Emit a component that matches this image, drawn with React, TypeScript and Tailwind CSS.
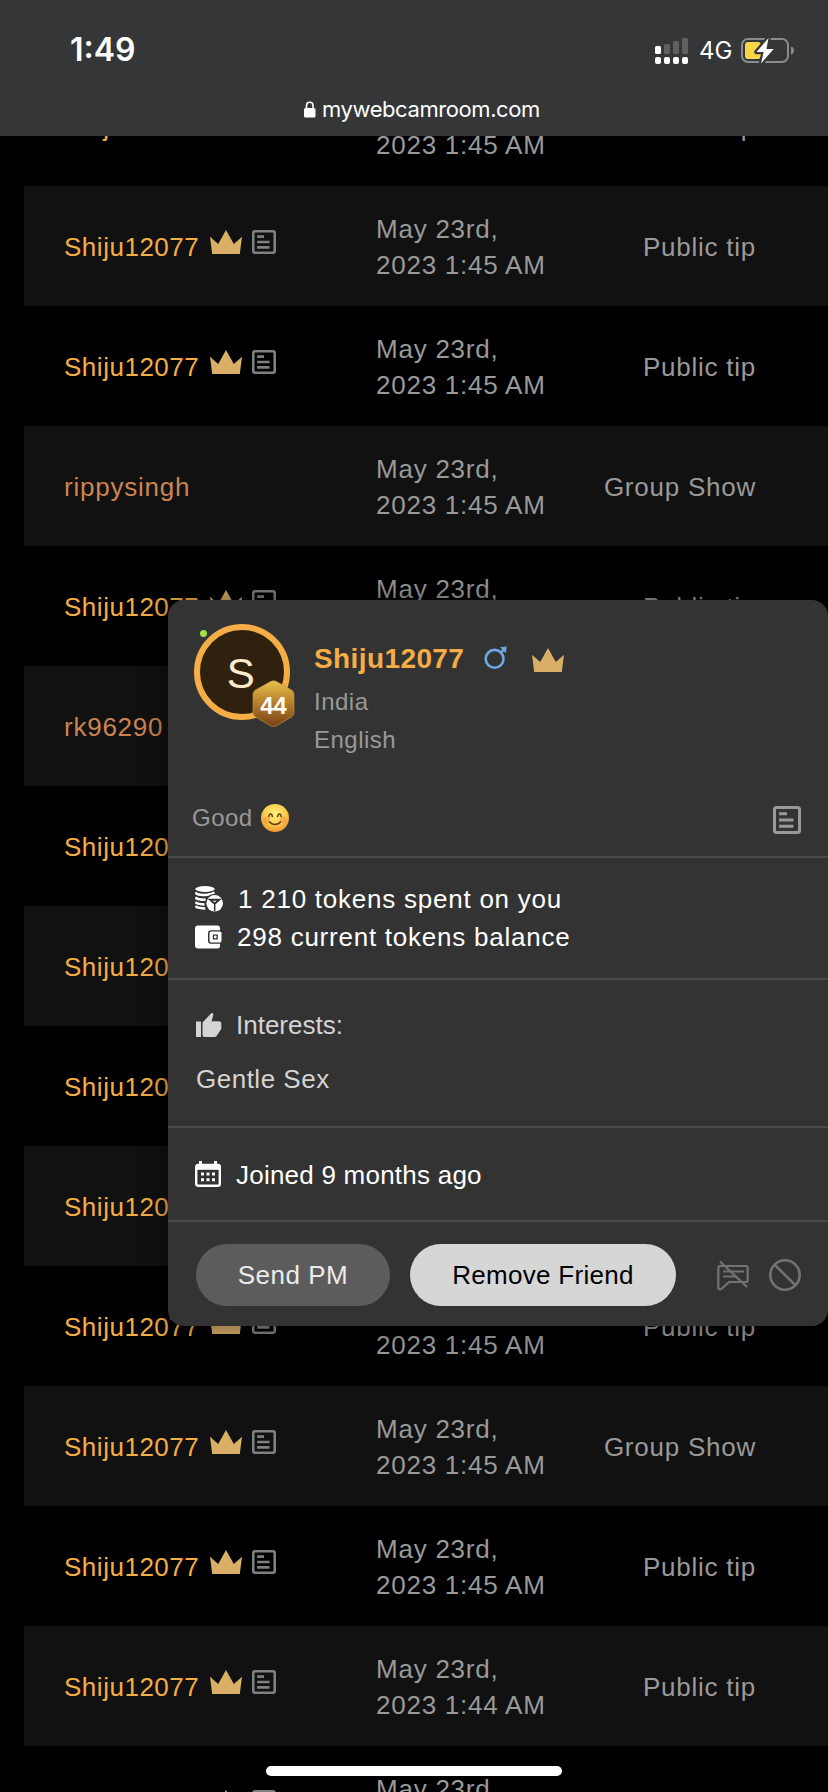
import React from "react";

type Tip = {
  user: string;
  vip: boolean;
  time: string;
  type: string;
};

const vipTip = (type = "Public tip", time = "2023 1:45 AM"): Tip => ({
  user: "Shiju12077",
  vip: true,
  time,
  type,
});

const tips: Tip[] = [
  vipTip(),
  vipTip(),
  vipTip(),
  { user: "rippysingh", vip: false, time: "2023 1:45 AM", type: "Group Show" },
  vipTip(),
  { user: "rk96290", vip: false, time: "2023 1:45 AM", type: "Group Show" },
  vipTip(),
  vipTip(),
  vipTip(),
  vipTip(),
  vipTip(),
  vipTip("Group Show"),
  vipTip(),
  vipTip("Public tip", "2023 1:44 AM"),
  vipTip("Public tip", "2023 1:44 AM"),
];

const Crown = ({ className = "" }: { className?: string }) => (
  <svg className={className} width="32" height="24" viewBox="0 0 32 24" fill="#d9ae66">
    <path d="M0 6.8 8.2 14 16 0l7.8 14L32 6.8 29.8 24H2.2z" />
  </svg>
);

const NoteIcon = ({ size, color }: { size: number; color: string }) => (
  <svg width={size} height={size} viewBox="0 0 28 28" fill="none" stroke={color} strokeWidth="3">
    <rect x="1.5" y="1.5" width="25" height="25" rx="2" />
    <path d="M6 7.7h8M6 14h14.5M6 20.3h14.5" />
  </svg>
);

const MaleIcon = () => (
  <svg width="24" height="24" viewBox="0 0 24 24" fill="none" stroke="#6ea8e6" strokeWidth="2.6">
    <circle cx="10.6" cy="12.8" r="8.9" />
    <path d="m16.5 6.8 4-4" />
    <path d="m16 1.2 6.6-.6-.6 6.6z" fill="#6ea8e6" stroke="none" />
  </svg>
);

const SmileIcon = () => (
  <svg width="28" height="28" viewBox="0 0 28 28" role="img" aria-label="😊">
    <defs>
      <radialGradient id="face" cx="50%" cy="36%" r="66%">
        <stop offset="0" stopColor="#fff07f" />
        <stop offset="0.55" stopColor="#fcd050" />
        <stop offset="1" stopColor="#e8912c" />
      </radialGradient>
    </defs>
    <circle cx="14" cy="14" r="14" fill="url(#face)" />
    <circle cx="5.5" cy="16" r="3.5" fill="#f4703a" opacity="0.35" />
    <circle cx="22.5" cy="16" r="3.5" fill="#f4703a" opacity="0.35" />
    <g fill="none" stroke="#6b3d0e" strokeWidth="1.5" strokeLinecap="round">
      <path d="M7.8 12.6c.4-3.6 3.2-3.6 3.6 0M16.6 12.6c.4-3.6 3.2-3.6 3.6 0" />
      <path d="M8.4 17.8c2.8 3.6 8.4 3.6 11.2 0" />
    </g>
  </svg>
);

const TokensIcon = () => (
  <svg width="28" height="26" viewBox="0 0 28 26">
    <ellipse cx="10" cy="3" rx="9.8" ry="2.9" fill="#fff" />
    <g fill="none" stroke="#fff" strokeWidth="2.5">
      <path d="M.3 6.6c2 2.2 7.2 2.7 12 2.1 3-.3 5.6-1 7.2-2.2" />
      <path d="M.3 11.6c2 1.6 5.5 2.3 10.6 2.1" />
      <path d="M.3 16.3c2 1.5 5 2.1 9.2 2.1" />
      <path d="M.3 20.3c2 1.5 5 2.1 10 2.1" />
    </g>
    <circle cx="19.7" cy="17.3" r="9.6" fill="#333" />
    <circle cx="19.7" cy="17.3" r="8.3" fill="#fff" />
    <path d="M14.500 13.400h10.400l-4.300 3.800h-1.800zM19.700 16v9" fill="#333" stroke="#333" strokeWidth="1.500" />
    <path d="M17.600 14.700h4.200l-2.100 1.500z" fill="#fff" />
  </svg>
);

const WalletIcon = () => (
  <svg width="28" height="24" viewBox="0 0 28 24">
    <path
      d="M3 .5h19.5a2.5 2.5 0 0 1 2.5 2.5v2.2H16a3 3 0 0 0-3 3v7.6a3 3 0 0 0 3 3h9V21a2.5 2.5 0 0 1-2.5 2.5H3A3 3 0 0 1 0 20.5V3.5a3 3 0 0 1 3-3z"
      fill="#fff"
    />
    <rect x="14.500" y="6.500" width="12" height="11" rx="1.700" fill="#fff" />
    <rect x="17.800" y="9.500" width="5" height="5" fill="#333" />
    <circle cx="20.300" cy="12" r="1.400" fill="#fff" />
  </svg>
);

const ThumbIcon = () => (
  <svg width="26" height="24" viewBox="0 0 26 24" fill="#d4d4d4">
    <path d="M0 8.5h5V24H0z" />
    <path d="M6.500 9.600 15 .6c.5-.6 1.200-.7 1.700-.3.6.4.8 1 .6 1.700L15.600 8.300H23a2.300 2.300 0 0 1 2.300 2.300V16L20.500 23c-.4.6-1 1-1.800 1H8.800a2.300 2.300 0 0 1-2.300-2.300z" />
  </svg>
);

const CalendarIcon = () => (
  <svg width="26" height="26" viewBox="0 0 26 26">
    <path d="M4 0h3v4H4zM19 0h3v4h-3z" fill="#fff" />
    <rect x="1.2" y="4" width="23.6" height="20.8" rx="2" fill="none" stroke="#fff" strokeWidth="2.4" />
    <path d="M1 3.5h24v5.3H1z" fill="#fff" />
    <g fill="#fff">
      <path d="M6 11.400h3v3H6zM11.500 11.400h3v3h-3zM17 11.400h3v3h-3z" />
      <path d="M6 17.200h3v3H6zM11.500 17.200h3v3h-3zM17 17.200h3v3h-3z" />
    </g>
  </svg>
);

const MuteChatIcon = () => (
  <svg width="32" height="31" viewBox="0 0 32 31" fill="none" stroke="#737373" strokeWidth="2.2">
    <path d="M3 6h26a1.700 1.700 0 0 1 1.700 1.700v12.600A1.700 1.700 0 0 1 29 22H12l-7.500 6.800c-1.500 1-3.200.6-3.200-1V7.700A1.700 1.700 0 0 1 3 6z" />
    <path d="M6 11.500h21M6 16.500h14" />
    <path d="M3 1.500 30 27" />
  </svg>
);

const BlockIcon = () => (
  <svg width="32" height="32" viewBox="0 0 32 32" fill="none" stroke="#737373" strokeWidth="2.6">
    <circle cx="16" cy="16" r="14.7" />
    <path d="m5.8 5.8 20.4 20.4" />
  </svg>
);

const StatusBar = () => (
  <header className="absolute inset-x-0 top-0 h-[136px] bg-[#353638] font-[Inter,sans-serif] text-white">
    <div className="flex h-[84px] items-center justify-between pt-4 pr-[34px] pl-[70px]">
      <span className="text-[32px] leading-10 font-semibold">1:49</span>
      <div className="flex items-center pt-0.5">
        <svg width="33" height="27" viewBox="0 0 33 27" fill="#fff">
          <rect x="0" y="8" width="6" height="8" rx="1.5" />
          <g fill="#5f6062">
            <rect x="9" y="6" width="6" height="10" rx="1.5" />
            <rect x="18" y="3" width="6" height="13" rx="1.5" />
            <rect x="27" y="0" width="6" height="16" rx="1.5" />
          </g>
          <rect x="0" y="19" width="6" height="7" rx="2" />
          <rect x="9" y="19" width="6" height="7" rx="2" />
          <rect x="18" y="19" width="6" height="7" rx="2" />
          <rect x="27" y="19" width="6" height="7" rx="2" />
        </svg>
        <span className="ml-[11px] w-[42px] text-[24px] leading-7">4G</span>
        <svg width="53" height="28" viewBox="0 0 53 28">
          <rect x="1" y="2" width="46" height="23" rx="6" fill="none" stroke="#8a8b8d" strokeWidth="2" />
          <path d="M50 9.500c4 1 4 7 0 8z" fill="#8a8b8d" />
          <rect x="4" y="5" width="16" height="17" rx="3" fill="#f8d648" />
          <path
            d="M27.500 1 15.500 15h7.200L20 26.500 32.700 12h-7.200z"
            fill="#fff"
            stroke="#353638"
            strokeWidth="4.5"
            strokeLinejoin="round"
            paintOrder="stroke"
          />
        </svg>
      </div>
    </div>
    <div className="flex h-[50px] items-center pl-[304px]">
      <svg width="12" height="17" viewBox="0 0 12 17">
        <rect x="0" y="7" width="11.5" height="9.5" rx="1.5" fill="#fff" />
        <path d="M2.500 8V4.500a3.200 3.200 0 0 1 6.500 0V8" fill="none" stroke="#fff" strokeWidth="1.6" />
      </svg>
      <span className="ml-1.5 text-[22px] leading-7 tracking-[-0.42px]">mywebcamroom.com</span>
    </div>
  </header>
);

const TipRow = ({ tip }: { tip: Tip }) => (
  <li className="flex h-[120px] shrink-0 items-center pt-0.5 pr-[72px] pl-10 text-[26px] leading-9 tracking-[0.76px] text-[#999] even:bg-[#111]">
    <div className="flex w-[312px] items-center">
      <span className={tip.vip ? "tracking-[0.52px] text-[#f5ad45]" : "text-[#cc8450]"}>{tip.user}</span>
      {tip.vip && (
        <div className="mb-2.5 ml-[11px] flex gap-2.5">
          <Crown />
          <NoteIcon size={24} color="#808080" />
        </div>
      )}
    </div>
    <div>
      May 23rd,
      <br />
      {tip.time}
    </div>
    <span className="ml-auto">{tip.type}</span>
  </li>
);

const UserPopup = () => (
  <section className="absolute top-[600px] left-[168px] h-[726px] w-[660px] rounded-2xl bg-[#333] tracking-[0.5px] shadow-[0_0_30px_rgba(0,0,0,0.5)]">
    <div className="h-[258px] border-b-2 border-[#4a4a4a] px-6 pt-6">
      <div className="flex">
        <div className="relative ml-0.5 flex size-24 items-center justify-center rounded-full border-[6px] border-[#f5ad45] bg-[#2f210e]">
          <span className="pt-1 pr-0.5 text-[42px] leading-none text-[#fdebcf]">S</span>
          <span className="absolute top-0 left-0 size-[7px] rounded-full bg-[#a6e047]" />
          <div className="absolute top-[50px] left-[52px] flex h-12 w-[43px] items-center justify-center">
            <svg className="absolute inset-0" width="43" height="48" viewBox="0 0 43 48">
              <defs>
                <linearGradient id="level" x1="0" y1="0" x2="0" y2="1">
                  <stop offset="0" stopColor="#e5c14b" />
                  <stop offset="0.5" stopColor="#b77c29" />
                  <stop offset="1" stopColor="#773f18" />
                </linearGradient>
              </defs>
              <path
                d="M18.500 1.500q3-1.500 6 0l15 8.500q2.500 1.500 2.500 4v19q0 2.500-2.500 4l-15 8.800q-3 1.500-6 0L3.500 37Q1 35.500 1 33V14q0-2.500 2.500-4z"
                fill="url(#level)"
                stroke="#c89a48"
                strokeOpacity="0.6"
              />
            </svg>
            <span className="relative pt-1 text-[24px] leading-none font-bold tracking-normal text-white">44</span>
          </div>
        </div>
        <div className="ml-6 pt-[17px] text-[24px] leading-[38px] text-[#999]">
          <div className="flex items-center">
            <h2 className="text-[28px] leading-9 font-bold tracking-[0.4px] text-[#f5ad45]">Shiju12077</h2>
            <div className="mb-0.5 ml-5">
              <MaleIcon />
            </div>
            <Crown className="mt-0.5 ml-6" />
          </div>
          <p className="mt-1.5">India</p>
          <p>English</p>
        </div>
      </div>
      <div className="mt-[41px] flex items-center pr-[3px] text-[24px] leading-9 text-[#999]">
        <span className="mr-2">Good</span>
        <SmileIcon />
        <div className="mt-1 ml-auto">
          <NoteIcon size={28} color="#999" />
        </div>
      </div>
    </div>

    <div className="h-[122px] border-b-2 border-[#4a4a4a] pt-[22px] pl-[27px] text-[26px] leading-[38px] tracking-[0.76px] text-white">
      <p className="flex items-center">
        <TokensIcon />
        <span className="ml-[15px]">1 210 tokens spent on you</span>
      </p>
      <p className="flex items-center">
        <WalletIcon />
        <span className="ml-3.5">298 current tokens balance</span>
      </p>
    </div>

    <div className="h-[148px] border-b-2 border-[#4a4a4a] pt-[26px] pl-7 text-[26px] leading-[38px] text-[#d4d4d4]">
      <p className="flex items-center tracking-normal">
        <ThumbIcon />
        <span className="ml-3.5">Interests:</span>
      </p>
      <p className="mt-4">Gentle Sex</p>
    </div>

    <div className="flex h-[94px] items-center border-b-2 border-[#4a4a4a] pl-[27px] text-[26px] tracking-[0.23px] text-white">
      <CalendarIcon />
      <span className="ml-[15px] pt-0.5">Joined 9 months ago</span>
    </div>

    <div className="flex items-center pt-[22px] pl-7 text-[26px]">
      <button className="h-[62px] w-[194px] rounded-full bg-[#5c5c5c] text-[#ebebeb]">Send PM</button>
      <button className="ml-5 h-[62px] w-[266px] rounded-full bg-[#d6d6d6] tracking-[0.3px] text-black">Remove Friend</button>
      <div className="ml-[41px] flex items-center gap-5">
        <MuteChatIcon />
        <BlockIcon />
      </div>
    </div>
  </section>
);

const App = () => {
  return (
    <main className="relative h-[1792px] w-[828px] overflow-hidden bg-black font-['Liberation_Sans',Arial,sans-serif]">
      <ul className="flex flex-col pt-[66px] pl-6">
        {tips.map((tip, i) => (
          <TipRow key={i} tip={tip} />
        ))}
      </ul>
      <UserPopup />
      <StatusBar />
      {/* Home indicator */}
      <div className="absolute bottom-4 left-[266px] h-2.5 w-[296px] rounded-full bg-white" />
    </main>
  );
};

export default App;
